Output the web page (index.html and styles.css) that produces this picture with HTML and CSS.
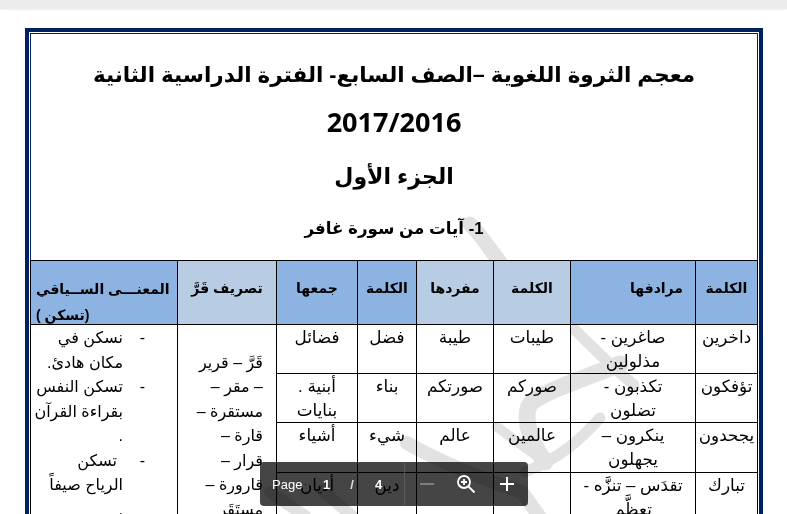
FILE: index.html
```html
<!DOCTYPE html>
<html lang="ar">
<head>
<meta charset="utf-8">
<title>معجم الثروة اللغوية</title>
<link rel="stylesheet" href="styles.css">
</head>
<body>
<div class="topstrip"></div>
<main class="frame">
  <div class="inner">
    <svg class="watermark" viewBox="0 0 787 514" width="787" height="514" aria-hidden="true">
      <g fill="none" stroke="#e2e2e2" stroke-linecap="round" stroke-linejoin="round">
        <path d="M470 224 C482 236 490 250 500 262" stroke-width="15"/>
        <path d="M575 330 C590 345 610 365 634 385" stroke-width="11"/>
        <path d="M620 364 C585 378 548 390 532 402 C522 412 528 440 545 462" stroke-width="17"/>
        <path d="M600 418 C580 440 560 458 525 472" stroke-width="11"/>
        <path d="M497 427 L545 462" stroke-width="10"/>
        <path d="M407 443 C440 462 480 478 522 492 L542 520" stroke-width="14"/>
        <path d="M270 492 L305 516" stroke-width="12"/>
        <path d="M322 490 L352 516" stroke-width="12"/>
      </g>
    </svg>
    <header class="heading">
      <h1 class="title">معجم الثروة اللغوية –الصف السابع- الفترة الدراسية الثانية<br><span class="year">2017/2016</span></h1>
      <h2 class="part">الجزء الأول</h2>
      <h3 class="section">1- آيات من سورة غافر</h3>
    </header>
    <table class="vocab" dir="rtl">
      <colgroup>
        <col class="c1"><col class="c2"><col class="c3"><col class="c4"><col class="c5"><col class="c6"><col class="c7"><col class="c8">
      </colgroup>
      <thead>
        <tr>
          <th class="blue">الكلمة</th>
          <th class="blue synonyms">مرادفها</th>
          <th class="pale">الكلمة</th>
          <th class="pale">مفردها</th>
          <th class="blue">الكلمة</th>
          <th class="blue">جمعها</th>
          <th class="pale">تصريف قَرَّ</th>
          <th class="blue wide"><div class="wide-box"><span class="wide-line">المعنـــى الســياقي</span><br>(تسكن )</div></th>
        </tr>
      </thead>
      <tbody>
        <tr class="r1">
          <td>داخرين</td>
          <td>صاغرين -<br>مذلولين</td>
          <td>طيبات</td>
          <td>طيبة</td>
          <td>فضل</td>
          <td>فضائل</td>
          <td rowspan="5" class="forms"><br>قَرَّ – قرير<br>– مقر –<br>مستقرة –<br>قارة –<br>قرار –<br>قارورة –<br>مستَقَر</td>
          <td rowspan="5" class="meanings">
            <ul class="list">
              <li>نسكن في<br>مكان هادئ.</li>
              <li>تسكن النفس<br>بقراءة القرآن<br>.</li>
              <li><span class="indent">تسكن</span><br>الرياح صيفاً<br>.</li>
            </ul>
          </td>
        </tr>
        <tr class="r2">
          <td>تؤفكون</td>
          <td>تكذبون -<br>تضلون</td>
          <td>صوركم</td>
          <td>صورتكم</td>
          <td>بناء</td>
          <td>أبنية .<br>بنايات</td>
        </tr>
        <tr class="r3">
          <td class="tight">يجحدون</td>
          <td>ينكرون –<br>يجهلون</td>
          <td>عالمين</td>
          <td>عالم</td>
          <td>شيء</td>
          <td>أشياء</td>
        </tr>
        <tr class="r4">
          <td>تبارك</td>
          <td>تقدَس – تنزَّه -<br>تعظَّم</td>
          <td></td>
          <td></td>
          <td>دين</td>
          <td>أديان</td>
        </tr>
        <tr class="r5"><td></td><td></td><td></td><td></td><td></td><td></td></tr>
      </tbody>
    </table>
  </div>
</main>
<div class="toolbar">
  <span class="tb-page">Page</span>
  <span class="tb-num">1</span>
  <span class="tb-slash">/</span>
  <span class="tb-num tb-total">4</span>
  <span class="tb-sep"></span>
  <svg class="tb-icon tb-minus" viewBox="0 0 16 16" width="16" height="16" aria-hidden="true"><path d="M1 8H15" stroke="#8c8c8c" stroke-width="1.6"/></svg>
  <svg class="tb-icon tb-zoom" viewBox="0 0 20 20" width="20" height="20" aria-hidden="true"><g fill="none" stroke="#fff" stroke-width="1.8"><circle cx="8" cy="8" r="6"/><path d="M12.5 12.5L18.5 18.5M5 8H11M8 5V11" /></g></svg>
  <svg class="tb-icon tb-plus" viewBox="0 0 16 16" width="16" height="16" aria-hidden="true"><path d="M1 8H15M8 1V15" stroke="#fff" stroke-width="2"/></svg>
</div>
</body>
</html>
```
FILE: styles.css
```css
* { box-sizing: border-box; }
html, body { margin: 0; height: 514px; overflow: hidden; background: #fff; }
body { position: relative; font-family: "Liberation Sans", "DejaVu Sans", sans-serif; color: #000; }
.topstrip { height: 9px; background: #ececec; box-shadow: 0 0 3px rgba(0,0,0,.12); }
.frame { margin: 19px 0 0 25px; width: 738px; height: 1000px; border: 4px solid #002060; padding: 1px; }
.inner { position: relative; height: 100%; border: 1px solid #002060; }
.watermark { position: absolute; left: -31px; top: -34px; }
.heading { position: relative; height: 226px; direction: rtl; text-align: center; padding: 18px 40px 0; }
.title { margin: 0; font-size: 21.5px; line-height: 47px; font-weight: 700; }
.year { font-family: "Open Sans", "Liberation Sans", sans-serif; font-size: 27px; line-height: 30px; vertical-align: -3px; }
.part { margin: 11px 0 0; font-size: 22px; line-height: 40px; font-weight: 700; }
.section { margin: 17px 0 0; font-size: 16.7px; line-height: 30px; font-weight: 700; }
.vocab { position: relative; width: 727px; table-layout: fixed; border-collapse: collapse; margin-left: -1px; font-size: 16.8px; line-height: 23.5px; }
.vocab th, .vocab td { border: 1px solid #000; text-align: center; padding: 1px 3px 0; vertical-align: top; font-weight: 400; }
.vocab th { height: 64px; font-weight: 700; font-size: 14px; padding-top: 15px; line-height: 24px; }
.blue { background: #8db3e2; }
.pale { background: #b8cce4; }
.vocab th.synonyms { text-align: right; padding-right: 12px; }
.vocab th.wide { text-align: left; padding: 15px 5px 0; line-height: 26px; }
.wide-box { height: 47px; }
.wide-line { white-space: nowrap; }
.c1 { width: 62px; } .c2 { width: 125px; } .c3 { width: 77px; } .c4 { width: 77px; }
.c5 { width: 59px; } .c6 { width: 81px; } .c7 { width: 99px; } .c8 { width: 147px; }
.r1 { height: 49px; } .r2 { height: 49px; } .r3 { height: 50px; } .r4 { height: 50px; } .r5 { height: 300px; }
.vocab td.tight { padding: 1px 0 0; }
.vocab td.forms { text-align: right; padding: 1px 13px 0 4px; white-space: nowrap; font-size: 16px; line-height: 24.5px; }
.vocab td.meanings { text-align: right; padding: 1px 0 0; white-space: nowrap; font-size: 16px; line-height: 24.5px; }
.list { list-style: none; margin: 0; padding: 0 54px 0 0; }
.list li { position: relative; }
.list li::before { content: "-"; position: absolute; right: -22px; }
.indent { padding-right: 6px; }
.toolbar { position: absolute; left: 260px; top: 462px; width: 268px; height: 44px; display: flex; align-items: center; color: #fff; font-size: 13px; font-weight: 700; }
.toolbar::before { content: ""; position: absolute; inset: 0; border-radius: 4px; background: #454545; mix-blend-mode: multiply; }
.toolbar > * { position: relative; flex: none; }
.tb-page { width: 42px; margin-left: 12px; font-weight: 400; }
.tb-num { width: 8px; margin-left: 9px; }
.tb-slash { width: 6px; margin-left: 18px; text-align: center; color: #ddd; }
.tb-total { margin-left: 20px; }
.tb-sep { width: 1px; height: 44px; margin-left: 21px; background: #5a5a5a; }
.tb-minus { margin-left: 14px; }
.tb-zoom { margin-left: 21px; }
.tb-plus { margin-left: 23px; }
```
